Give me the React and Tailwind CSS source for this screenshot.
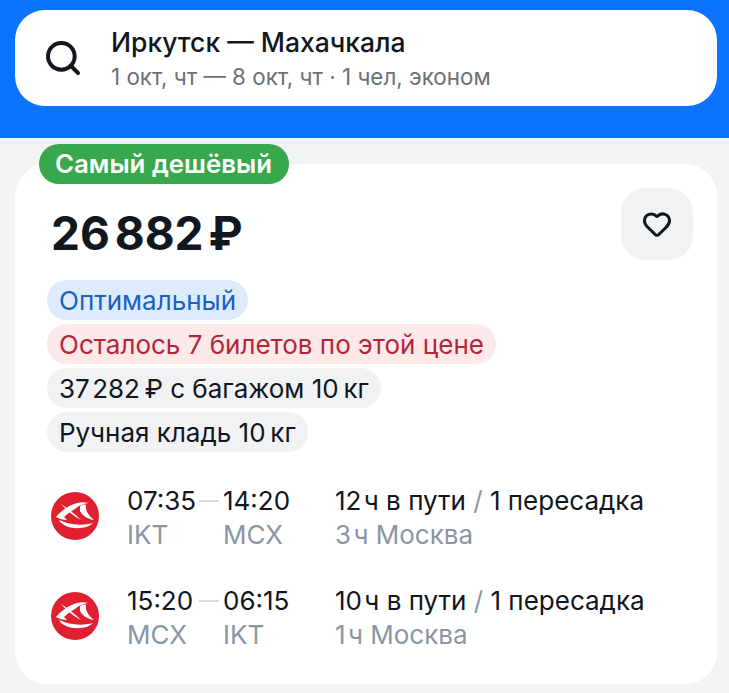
import { Search, Heart } from 'lucide-react'

const tags = [
  { text: 'Оптимальный', cls: 'bg-[#deebfc] text-[#1762c4]' },
  { text: 'Осталось 7 билетов по этой цене', cls: 'bg-[#fde8ea] text-[#b3263a]' },
  { text: '37\u200a282\u2009₽ с багажом 10\u2009кг', cls: 'bg-[#f0f2f4] text-[#11161f]' },
  { text: 'Ручная кладь 10\u2009кг', cls: 'bg-[#f0f2f4] text-[#11161f]' },
]

const flights = [
  { dep: '07:35', arr: '14:20', from: 'IKT', to: 'MCX', total: '12\u200aч в пути', stop: '3\u200aч Москва' },
  { dep: '15:20', arr: '06:15', from: 'MCX', to: 'IKT', total: '10\u200aч в пути', stop: '1\u200aч Москва' },
]

function AirlineLogo() {
  return (
    <svg viewBox="0 0 48 48" className="w-[48px] h-[48px] mt-[8px] shrink-0">
      <circle cx="24" cy="24" r="24" fill="#e01f30" />
      <path d="M5 25 C10 19 18 13 26 11 C30 10 34 10 37 11 C31 12 27 14 24 17 C20 19 16 22 13 25 L16 28 C12 28 8 27 5 25 Z" fill="#fff" />
      <path d="M29 14 C31 13 33 12 35 13 C34 18 37 23 43 28 C36 27 31 23 29 19 Z" fill="#fff" />
      <path d="M8 28 C15 31 28 35 42 31 C36 37 22 38 13 33 C11 32 9 30 8 28 Z" fill="#fff" />
      <path d="M10 12 C16 16 24 22 30 28 C24 25 16 19 10 12 Z" fill="#fff" />
    </svg>
  )
}

export default function App() {
  return (
    <div className="w-[729px] h-[693px] overflow-hidden bg-[#f2f4f4] font-['Inter',sans-serif]">
      {/* Шапка с поиском */}
      <div className="bg-[#0c73fe] h-[138px] pl-[15px] pr-[12px] pt-[10px]">
        <div className="h-[96px] bg-white rounded-[30px] flex items-center pl-[28px]">
          <Search className="w-[40px] h-[40px] text-[#11161f]" strokeWidth={2.4} />
          <div className="ml-[28px]">
            <div className="text-[26.5px] leading-[34px] font-medium text-[#11161f]">Иркутск — Махачкала</div>
            <div className="text-[22.4px] leading-[30px] mt-[3px] text-[#6b7178]">1 окт, чт — 8 окт, чт · 1 чел, эконом</div>
          </div>
        </div>
      </div>

      {/* Карточка */}
      <div className="relative mt-[26px] ml-[15px] mr-[12px] h-[520px] bg-white rounded-[32px] pt-[40px] pl-[32px] pr-[24px]">
        <div className="absolute left-[24px] -top-[20px] h-[40px] pl-[16px] pr-[17px] rounded-full bg-[#37a94c] text-white text-[25.8px] leading-[40px] font-semibold">
          Самый дешёвый
        </div>
        <button className="absolute right-[24px] top-[24px] w-[72px] h-[72px] rounded-[24px] bg-[#f0f2f4] flex items-center justify-center">
          <Heart className="w-[30px] h-[30px] text-[#11161f]" strokeWidth={2.4} />
        </button>

        <div className="pl-[4px] text-[46px] leading-[58px] font-bold text-[#11161f] [word-spacing:-6px]">26 882 ₽</div>

        <div className="mt-[18px] flex flex-col items-start gap-[4px]">
          {tags.map((tag) => (
            <div key={tag.text} className={`h-[40px] px-[12px] rounded-[20px] text-[26px] leading-[41px] whitespace-nowrap ${tag.cls}`}>
              {tag.text}
            </div>
          ))}
        </div>

        <div className="mt-[32px] flex flex-col gap-[32px]">
          {flights.map((f) => (
            <div key={f.dep} className="flex items-start pl-[4px]">
              <AirlineLogo />
              <div className="ml-[28px] w-[208px] text-[26px] leading-[34px]">
                <div className="flex items-center text-[#11161f]">
                  <span className="w-[72px]">{f.dep}</span>
                  <span className="h-[2px] w-[20px] bg-[#d9dcdf]" />
                  <span className="ml-[4px]">{f.arr}</span>
                </div>
                <div className="grid grid-cols-[96px_1fr] text-[#8a96a3]">
                  <span>{f.from}</span>
                  <span>{f.to}</span>
                </div>
              </div>
              <div className="text-[26px] leading-[34px]">
                <div className="text-[#11161f]">
                  {f.total} <span className="text-[#8a96a3]">/</span> 1 пересадка
                </div>
                <div className="text-[#8a96a3]">{f.stop}</div>
              </div>
            </div>
          ))}
        </div>
      </div>
    </div>
  )
}
